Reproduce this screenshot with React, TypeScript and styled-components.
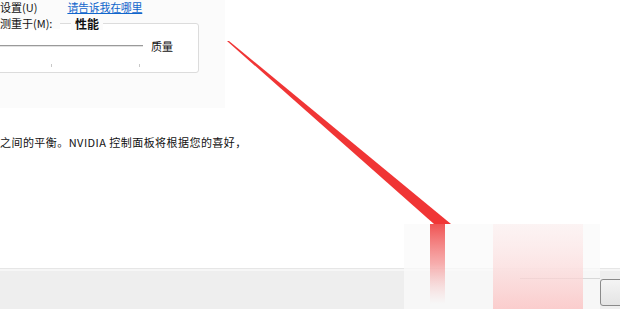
import React from "react";
import styled, { createGlobalStyle } from "styled-components";

const Global = createGlobalStyle`
  html, body { margin: 0; padding: 0; background: #ffffff; overflow: hidden; }
  body { font-family: "Noto Sans CJK SC", "Noto Sans", sans-serif; color: #111; }
`;

const Page = styled.div`
  position: relative;
  width: 620px;
  height: 309px;
  display: flex;
  flex-direction: column;
  overflow: hidden;
  background: #fff;
`;

const Content = styled.div`
  flex: 1;
  display: flex;
  flex-direction: column;
`;

const TopPanel = styled.div`
  width: 225px;
  height: 108px;
  background: #fbfbfb;
  display: flex;
  flex-direction: column;
`;

const LinkRow = styled.div`
  display: flex;
  align-items: flex-start;
  height: 14px;
  font-size: 11px;
  line-height: 14px;
`;

const Link = styled.a`
  margin-left: 30px;
  color: #1166cc;
  text-decoration: underline;
  font-size: 11px;
  line-height: 14px;
  letter-spacing: -0.3px;
`;

const SliderSection = styled.div`
  position: relative;
  margin-top: 9px;
`;

const FieldLabel = styled.span`
  position: absolute;
  left: 0;
  top: -6px;
  padding-right: 8px;
  background: #fbfbfb;
  font-size: 11px;
  line-height: 12px;
  z-index: 1;
`;

const GroupBox = styled.div`
  position: relative;
  margin-left: -10px;
  width: 207px;
  height: 48px;
  border: 1px solid #dcdcdc;
  border-radius: 3px;
  background: #ffffff;
  display: flex;
  flex-direction: column;
`;

const GroupTitle = styled.span`
  position: absolute;
  left: 80px;
  top: -7px;
  padding: 0 4px;
  background: #fbfbfb;
  font-size: 12px;
  font-weight: 700;
  line-height: 13px;
`;

const SliderRow = styled.div`
  display: flex;
  align-items: center;
  margin-top: 13px;
  height: 16px;
`;

const Track = styled.div`
  width: 152px;
  height: 1px;
  background: #9a9a9a;
  box-shadow: 0 1px 0 #e2e2e2;
`;

const SliderEnd = styled.span`
  margin-left: 8px;
  font-size: 11px;
  line-height: 14px;
  margin-top: 2px;
`;

const Ticks = styled.div`
  display: flex;
  margin-top: 11px;
  padding-left: 60px;
  gap: 87px;
`;

const Tick = styled.span`
  width: 1px;
  height: 3px;
  background: #c8c8c8;
`;

const Description = styled.p`
  margin: 28px 0 0 0;
  font-size: 11px;
  line-height: 13px;
  white-space: nowrap;
  letter-spacing: 0.45px;
`;

const BottomBar = styled.div`
  height: 41px;
  border-top: 1px solid #e6e6e6;
  box-shadow: inset 0 1px 0 #f6f6f6, inset 0 2px 0 #f6f6f6;
  background: #eeeeee;
  display: flex;
  justify-content: flex-end;
  padding-top: 10px;
  box-sizing: border-box;
`;

const Button = styled.button`
  width: 30px;
  height: 27px;
  margin-right: -10px;
  border: 1px solid #8a8a8a;
  border-radius: 3px;
  background: linear-gradient(#f4f4f4, #e4e4e4);
  padding: 0;
`;

const Overlay = styled.svg`
  position: absolute;
  left: 0;
  top: 0;
  pointer-events: none;
`;

export default function App() {
  return (
    <>
      <Global />
      <Page>
        <Content>
          <TopPanel>
            <LinkRow>
              <span>设置(U)</span>
              <Link href="#">请告诉我在哪里</Link>
            </LinkRow>
            <SliderSection>
              <FieldLabel>测重于(M):</FieldLabel>
              <GroupBox>
                <GroupTitle>性能</GroupTitle>
                <SliderRow>
                  <Track />
                  <SliderEnd>质量</SliderEnd>
                </SliderRow>
                <Ticks>
                  <Tick />
                  <Tick />
                </Ticks>
              </GroupBox>
            </SliderSection>
          </TopPanel>
          <Description>之间的平衡。NVIDIA 控制面板将根据您的喜好，</Description>
        </Content>
        <BottomBar>
          <Button aria-label="按钮" />
        </BottomBar>
        <Overlay width="620" height="309" viewBox="0 0 620 309">
          <defs>
            <linearGradient id="redFade" x1="0" y1="0" x2="0" y2="1">
              <stop offset="0" stopColor="#ef4a4a" stopOpacity="0.95" />
              <stop offset="0.5" stopColor="#f47a7a" stopOpacity="0.6" />
              <stop offset="1" stopColor="#f8b0b0" stopOpacity="0" />
            </linearGradient>
            <linearGradient id="pinkFade" x1="0" y1="0" x2="0" y2="1">
              <stop offset="0" stopColor="#fde8e8" stopOpacity="0.4" />
              <stop offset="1" stopColor="#fbc8c8" stopOpacity="0.9" />
            </linearGradient>
          </defs>
          <polygon points="227,41 229,41 451,224 434,224" fill="#f03535" />
          <rect x="404" y="224" width="196" height="85" fill="#fafafa" opacity="0.75" />
          <line x1="520" y1="278.5" x2="600" y2="278.5" stroke="#d8d8d8" strokeWidth="1" />
          <rect x="430" y="224" width="15" height="80" fill="url(#redFade)" />
          <rect x="493" y="224" width="90" height="85" fill="url(#pinkFade)" />
        </Overlay>
      </Page>
    </>
  );
}
